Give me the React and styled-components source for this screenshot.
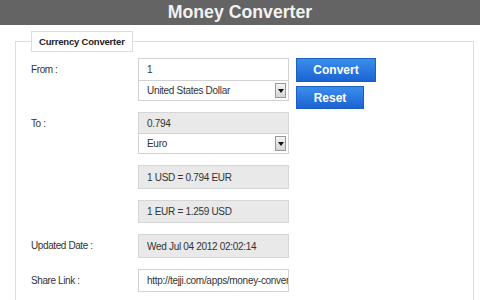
import styled, { createGlobalStyle } from "styled-components";

const GlobalStyle = createGlobalStyle`
  body {
    margin: 0;
    background: #ffffff;
    font-family: "Liberation Sans", Arial, sans-serif;
  }
`;

const Header = styled.header`
  height: 25px;
  background: #646464;
  color: #f2f2f2;
  font-size: 17.7px;
  font-weight: bold;
  display: flex;
  align-items: center;
  justify-content: center;
`;

const Panel = styled.fieldset`
  margin: 6px 6px 0 15px;
  padding: 6px 15px 20px;
  border: 1px solid #dedede;
  min-width: 0;
`;

const Legend = styled.legend`
  margin: 0;
  padding: 0 7px;
  height: 19px;
  line-height: 19px;
  border: 1px solid #dcdcdc;
  font-size: 9.5px;
  font-weight: bold;
  letter-spacing: -0.2px;
  color: #222;
`;

const Grid = styled.div`
  display: grid;
  grid-template-columns: 107px 151px auto;
  row-gap: 11px;
  align-items: start;
`;

const Label = styled.div`
  font-size: 10px;
  letter-spacing: -0.4px;
  color: #333;
  line-height: 23px;
`;

const Stack = styled.div`
  display: flex;
  flex-direction: column;
`;

const Box = styled.div`
  box-sizing: border-box;
  height: ${(p) => (p.$h ? p.$h : 23)}px;
  padding: 0 8px;
  display: flex;
  align-items: center;
  font-size: 10px;
  letter-spacing: -0.3px;
  color: #333;
  white-space: nowrap;
  overflow: hidden;
  border: 1px solid ${(p) => (p.$muted ? "#d6d6d6" : "#d2d2d2")};
  background: ${(p) => (p.$muted ? "#e9e9e9" : "#ffffff")};
  margin-top: ${(p) => (p.$joined ? "-1px" : "0")};
`;

const SelectBox = styled(Box)`
  justify-content: space-between;
  padding-right: 2px;
`;

const Arrow = styled.span`
  width: 11px;
  height: 15px;
  box-sizing: border-box;
  border: 1px solid #9a9a9a;
  background: linear-gradient(#f4f4f4, #d6d6d6);
  display: flex;
  align-items: center;
  justify-content: center;
  &::after {
    content: "";
    border-left: 3px solid transparent;
    border-right: 3px solid transparent;
    border-top: 4px solid #111;
  }
`;

const Buttons = styled.div`
  display: flex;
  flex-direction: column;
  align-items: flex-start;
  gap: 4px;
  padding-left: 7px;
  margin-bottom: -12px;
`;

const Button = styled.button`
  box-sizing: border-box;
  width: ${(p) => p.$w}px;
  height: ${(p) => p.$h}px;
  border: 1px solid #1b5fc0;
  background: linear-gradient(#3a8eec, #1c63d2);
  color: #ffffff;
  font-family: "Liberation Sans", Arial, sans-serif;
  font-size: 12px;
  font-weight: bold;
  padding: 0;
  cursor: pointer;
`;

const Select = ({ children }) => (
  <SelectBox $joined $h={21}>
    {children}
    <Arrow />
  </SelectBox>
);

const App = () => {
  return (
    <>
      <GlobalStyle />
      <Header>Money Converter</Header>
      <Panel>
        <Legend>Currency Converter</Legend>
        <Grid>
          <Label>From :</Label>
          <Stack>
            <Box>1</Box>
            <Select>United States Dollar</Select>
          </Stack>
          <Buttons>
            <Button $w={80} $h={24}>Convert</Button>
            <Button $w={68} $h={23}>Reset</Button>
          </Buttons>

          <Label>To :</Label>
          <Stack>
            <Box $muted $h={22}>0.794</Box>
            <Select>Euro</Select>
          </Stack>
          <div />

          <div />
          <Box $muted $h={24}>1 USD = 0.794 EUR</Box>
          <div />

          <div />
          <Box $muted>1 EUR = 1.259 USD</Box>
          <div />

          <Label>Updated Date :</Label>
          <Box $muted $h={24}>Wed Jul 04 2012 02:02:14</Box>
          <div />

          <Label>Share Link :</Label>
          <Box>http://tejji.com/apps/money-converter</Box>
          <div />
        </Grid>
      </Panel>
    </>
  );
};

export default App;
